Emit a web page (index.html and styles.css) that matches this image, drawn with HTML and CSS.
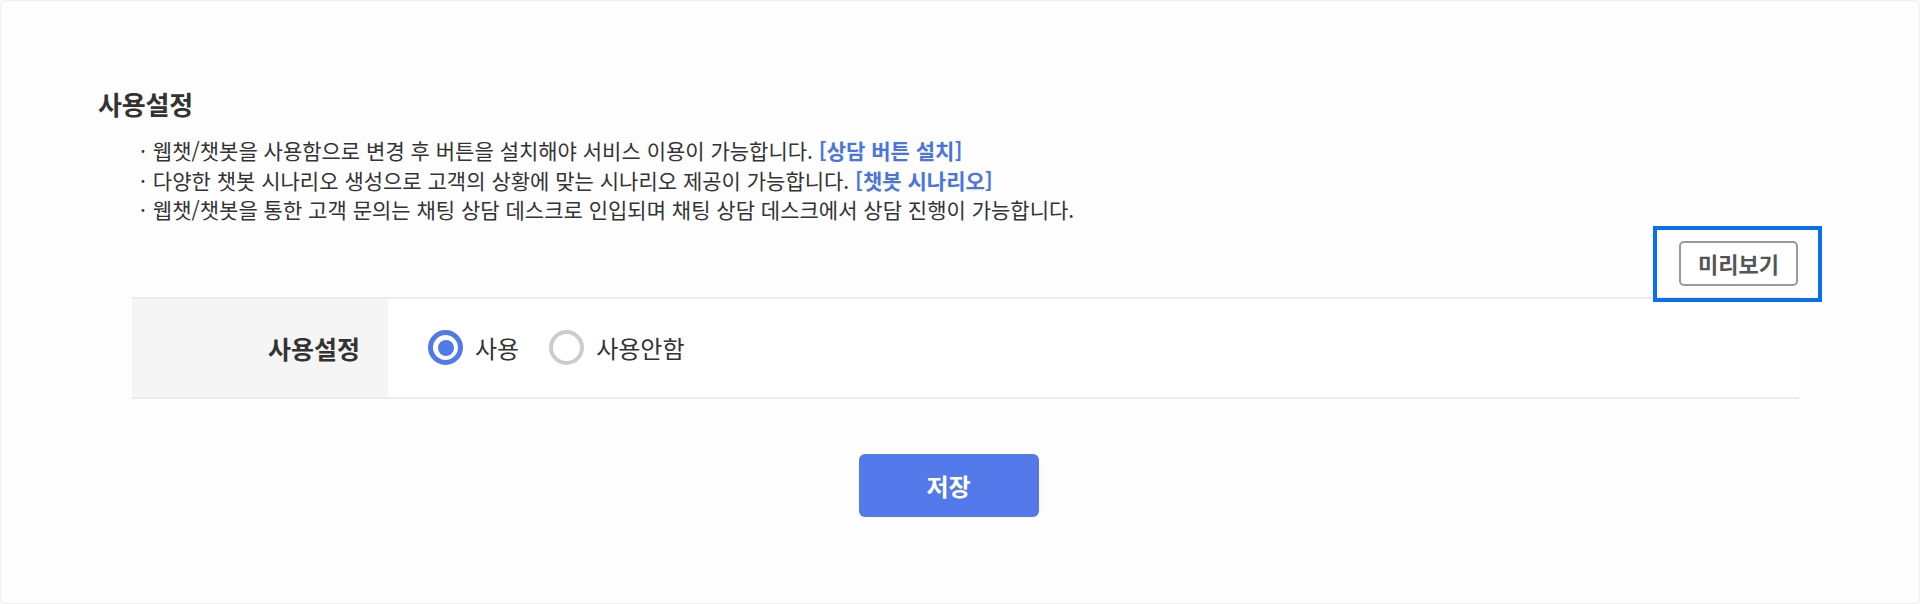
FILE: index.html
```html
<!DOCTYPE html>
<html lang="ko">
<head>
<meta charset="utf-8">
<title>사용설정</title>
<link rel="stylesheet" href="styles.css">
</head>
<body>
<div class="frame">
  <div class="content">
    <h2 class="title">사용설정</h2>
    <ul class="notes">
      <li>웹챗/챗봇을 사용함으로 변경 후 버튼을 설치해야 서비스 이용이 가능합니다. <a class="link" href="#">[상담 버튼 설치]</a></li>
      <li>다양한 챗봇 시나리오 생성으로 고객의 상황에 맞는 시나리오 제공이 가능합니다. <a class="link" href="#">[챗봇 시나리오]</a></li>
      <li>웹챗/챗봇을 통한 고객 문의는 채팅 상담 데스크로 인입되며 채팅 상담 데스크에서 상담 진행이 가능합니다.</li>
    </ul>
    <div class="preview-row">
      <div class="preview-wrap">
        <button class="preview-btn" type="button">미리보기</button>
        <span class="highlight"></span>
      </div>
    </div>
    <div class="setting-table">
      <div class="label-cell">사용설정</div>
      <div class="value-cell">
        <label class="radio"><span class="radio-dot checked"></span><span>사용</span></label>
        <label class="radio"><span class="radio-dot"></span><span>사용안함</span></label>
      </div>
    </div>
    <div class="actions">
      <button class="save-btn" type="button">저장</button>
    </div>
  </div>
</div>
</body>
</html>
```
FILE: styles.css
```css
* { box-sizing: border-box; }
html, body { margin: 0; padding: 0; }
body {
  background: #fdfdfd;
  font-family: "Noto Sans CJK KR", "Noto Sans", sans-serif;
  color: #333;
}
.frame {
  height: 604px;
  border: 1px solid #efefef;
  border-radius: 4px;
  padding-top: 1px;
}
.content {
  width: 1822px;
  padding-left: 73px;
}
.title {
  margin: 84px 0 0;
  padding-left: 24px;
  font-size: 26px;
  font-weight: 700;
  line-height: 36px;
  color: #333;
  letter-spacing: -0.2px;
}
.notes {
  list-style: none;
  margin: 14px 0 0;
  padding: 0 0 0 66px;
  font-size: 21px;
  line-height: 29.5px;
  color: #333;
}
.notes li::before {
  content: "·";
  margin-right: 7px;
}
.link {
  color: #4a74e2;
  font-weight: 700;
  text-decoration: none;
}
.preview-row {
  display: flex;
  justify-content: flex-end;
  padding-right: 25px;
  margin-top: 16px;
}
.preview-wrap { position: relative; }
.preview-btn {
  width: 119px;
  height: 45px;
  border: 2px solid #9a9a9a;
  border-radius: 5px;
  background: #fff;
  font-family: inherit;
  font-size: 22px;
  font-weight: 700;
  color: #555;
  padding: 0;
}
.highlight {
  position: absolute;
  top: -15px;
  left: -26px;
  right: -24px;
  bottom: -16px;
  border: 4px solid #0b6df0;
}
.setting-table {
  display: flex;
  margin: 11px 24px 0 58px;
  height: 102px;
  border-top: 2px solid #ececec;
  border-bottom: 2px solid #ececec;
}
.label-cell {
  width: 256px;
  background: #f5f5f5;
  display: flex;
  align-items: center;
  justify-content: flex-end;
  padding-right: 28px;
  font-size: 25px;
  font-weight: 700;
  color: #333;
}
.value-cell {
  display: flex;
  align-items: center;
  gap: 30px;
  padding-left: 40px;
  background: #fff;
  flex: 1;
}
.radio {
  display: flex;
  align-items: center;
  gap: 12px;
  font-size: 24px;
  color: #333;
}
.radio-dot {
  width: 35px;
  height: 35px;
  border-radius: 50%;
  border: 4px solid #cccccc;
  background: #fff;
  display: flex;
  align-items: center;
  justify-content: center;
}
.radio-dot.checked {
  border: 5px solid #5079ea;
}
.radio-dot.checked::after {
  content: "";
  width: 16px;
  height: 16px;
  border-radius: 50%;
  background: #5079ea;
}
.actions {
  display: flex;
  justify-content: center;
  margin-top: 55px;
}
.save-btn {
  width: 180px;
  height: 63px;
  border: none;
  border-radius: 6px;
  background: #5479ea;
  color: #fff;
  font-family: inherit;
  font-size: 24px;
  font-weight: 700;
}
```
